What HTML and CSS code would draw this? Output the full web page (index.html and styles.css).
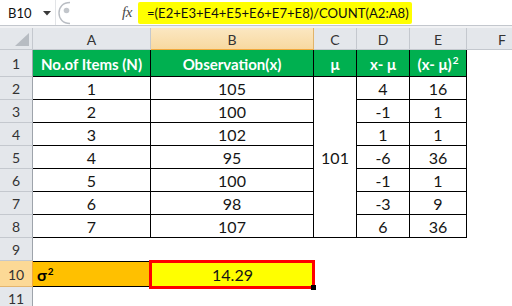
FILE: index.html
```html
<!DOCTYPE html>
<html>
<head>
<meta charset="utf-8">
<link rel="stylesheet" href="styles.css">
</head>
<body>
<div class="app">
  <div class="fbar">
    <div class="namebox">
      <span class="nb-text">B10</span>
      <svg class="nb-arrow" width="8" height="5" viewBox="0 0 8 5"><path d="M0 0H8L4 4.5Z" fill="#3a3a3a"/></svg>
    </div>
    <div class="splitter">
      <svg width="16" height="24" viewBox="0 0 16 24"><path d="M13 1.5C6 1.5 2 6 2 12s4 10.5 11 10.5" fill="none" stroke="#b9bdc3" stroke-width="1.4"/><circle cx="9.5" cy="9.5" r="2.8" fill="#c2c6cb"/></svg>
    </div>
    <div class="fx">fx</div>
    <div class="formula"><span class="hl">=(E2+E3+E4+E5+E6+E7+E8)/COUNT(A2:A8)</span></div>
  </div>
  <div class="band"></div>
  <div class="sheet">
    <div class="corner"><svg width="16" height="14" viewBox="0 0 16 14"><path d="M15 0V13H1Z" fill="#b7bcc2"/></svg></div>
    <div class="ch">A</div>
    <div class="ch sel">B</div>
    <div class="ch">C</div>
    <div class="ch">D</div>
    <div class="ch">E</div>
    <div class="ch last">F</div>

    <div class="rh r1">1</div>
    <div class="c g">No.of Items (N)</div>
    <div class="c g">Observation(x)</div>
    <div class="c g">μ</div>
    <div class="c g">x- μ</div>
    <div class="c g"><span>(x- μ)<sup>2</sup></span></div>
    <div class="e"></div>

    <div class="rh">2</div>
    <div class="c">1</div>
    <div class="c">105</div>
    <div class="c merged">101</div>
    <div class="c">4</div>
    <div class="c">16</div>
    <div class="e"></div>

    <div class="rh">3</div>
    <div class="c">2</div>
    <div class="c">100</div>
    <div class="c">-1</div>
    <div class="c">1</div>
    <div class="e"></div>

    <div class="rh">4</div>
    <div class="c">3</div>
    <div class="c">102</div>
    <div class="c">1</div>
    <div class="c">1</div>
    <div class="e"></div>

    <div class="rh">5</div>
    <div class="c">4</div>
    <div class="c">95</div>
    <div class="c">-6</div>
    <div class="c">36</div>
    <div class="e"></div>

    <div class="rh">6</div>
    <div class="c">5</div>
    <div class="c">100</div>
    <div class="c">-1</div>
    <div class="c">1</div>
    <div class="e"></div>

    <div class="rh">7</div>
    <div class="c">6</div>
    <div class="c">98</div>
    <div class="c">-3</div>
    <div class="c">9</div>
    <div class="e"></div>

    <div class="rh">8</div>
    <div class="c">7</div>
    <div class="c">107</div>
    <div class="c">6</div>
    <div class="c">36</div>
    <div class="e"></div>

    <div class="rh">9</div>
    <div class="e"></div><div class="e"></div><div class="e"></div><div class="e"></div><div class="e"></div><div class="e"></div>

    <div class="rh rsel">10</div>
    <div class="sigma"><span>σ<sup>2</sup></span></div>
    <div class="active">14.29</div>
    <div class="e"></div><div class="e"></div><div class="e"></div><div class="e"></div>

    <div class="rh">11</div>
    <div class="e"></div><div class="e"></div><div class="e"></div><div class="e"></div><div class="e"></div><div class="e"></div>
  </div>
</div>
</body>
</html>
```
FILE: styles.css
```css
* { box-sizing: border-box; }
html, body { margin: 0; padding: 0; background: #fff; }
body { width: 512px; height: 306px; overflow: hidden; font-family: Lato, "Open Sans", sans-serif; }

.app { width: 512px; }

.fbar {
  height: 26px;
  display: flex;
  align-items: stretch;
  background: #fff;
  border-bottom: 1px solid #c3c7cd;
}
.namebox {
  width: 56px;
  display: flex;
  align-items: center;
  padding-left: 8px;
  border-right: 1px solid #e2e4e7;
}
.nb-text { font-size: 13px; color: #111; width: 35px; }
.nb-arrow { margin-top: 1px; }
.splitter { width: 66px; display: flex; align-items: center; padding-left: 1px; }
.fx {
  width: 16px;
  font-family: "Liberation Serif", serif;
  font-style: italic;
  font-size: 15px;
  color: #4a4a4a;
  display: flex;
  align-items: center;
  letter-spacing: -0.5px;
}
.formula { flex: 1; display: flex; align-items: center; padding-top: 1px; }
.hl {
  background: #ffff00;
  height: 22px;
  display: flex;
  align-items: center;
  padding: 0 3px 0 9px;
  font-size: 13.1px;
  color: #111;
  border-radius: 2px;
}
.band { height: 2px; background: #f1f2f4; }

.sheet {
  display: grid;
  grid-template-columns: 33px 118px 163px 43px 53px 57px 45px;
  grid-template-rows: 22px 27px repeat(8, 23px) 26px 23px;
}
.corner {
  background: #e4e7eb;
  border-right: 1px solid #c4c8ce;
  border-bottom: 1px solid #c4c8ce;
  display: flex;
  align-items: flex-end;
  justify-content: flex-end;
  padding: 0 2px 2px 0;
}
.ch {
  background: #e4e7eb;
  border-right: 1px solid #c4c8ce;
  border-bottom: 1px solid #c4c8ce;
  display: flex;
  align-items: center;
  justify-content: center;
  font-size: 14px;
  color: #333;
  padding-top: 1px;
}
.ch.last { justify-content: flex-end; padding-right: 6px; border-right: none; }
.ch.sel {
  background: linear-gradient(#fbe7c2, #f8d9a0);
  border-bottom: 1px solid #f0a83c;
  border-right: 1px solid #e1b36a;
}
.rh {
  background: #e4e7eb;
  border-right: 1px solid #9ea4ab;
  border-bottom: 1px solid #c4c8ce;
  display: flex;
  align-items: center;
  justify-content: center;
  font-size: 14px;
  color: #333;
  padding-top: 1px;
}
.rh.rsel { background: #fcd996; border-right: 1px solid #f0a83c; border-bottom-color: #e3b56e; }

.c {
  display: flex;
  align-items: center;
  justify-content: center;
  border-right: 1px solid #000;
  border-bottom: 1px solid #000;
  font-size: 16px;
  color: #151515;
  padding-top: 1px;
  white-space: nowrap;
}
.c.g {
  background: #00b050;
  color: #fff;
  font-weight: bold;
  font-size: 15px;
  align-items: flex-end;
  padding: 0 0 3px 0;
}
.c.g sup { font-size: 10px; vertical-align: 6px; line-height: 0; margin-left: 1px; }
.c.merged { grid-row: span 7; }

.sigma {
  background: #ffc000;
  border-top: 1px solid #000;
  border-bottom: 1px solid #000;
  display: flex;
  align-items: center;
  padding-left: 4px;
  font-weight: bold;
  font-size: 16px;
  color: #000;
}
.sigma sup { font-size: 10px; vertical-align: 6px; line-height: 0; margin-left: 1px; }
.active {
  position: relative;
  background: #ffff00;
  display: flex;
  align-items: center;
  justify-content: center;
  font-size: 16px;
  color: #151515;
  padding-top: 1px;
}
.active::after {
  content: "";
  position: absolute;
  left: -2px; top: -1px; right: -1px; bottom: -2px;
  border: 3px solid #ff0000;
}
.active::before {
  content: "";
  position: absolute;
  right: -2px; bottom: -3px;
  width: 5px; height: 5px;
  background: #000;
  z-index: 2;
}
```
